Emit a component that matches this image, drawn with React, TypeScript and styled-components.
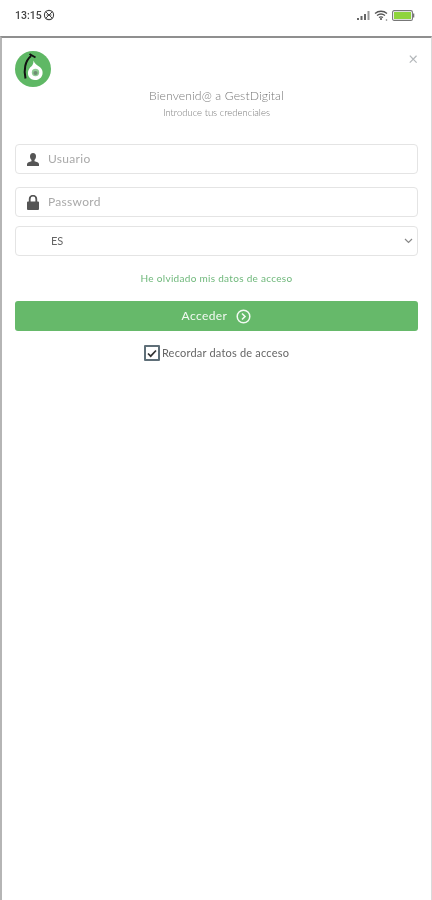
import React from "react";
import styled, { createGlobalStyle } from "styled-components";

const GlobalStyle = createGlobalStyle`
  html, body {
    margin: 0;
    padding: 0;
    background: #fff;
  }
  * {
    box-sizing: border-box;
  }
`;

const Screen = styled.div`
  width: 432px;
  height: 900px;
  display: flex;
  flex-direction: column;
  background: #fff;
  overflow: hidden;
  font-family: Lato, "Open Sans", sans-serif;
  filter: blur(0.6px);
`;

const StatusBar = styled.div`
  height: 36px;
  flex: none;
  display: flex;
  align-items: center;
  justify-content: space-between;
  padding: 0 17px 6px 15px;
`;

const Clock = styled.div`
  display: flex;
  align-items: center;
  gap: 1px;
  font-family: Roboto, sans-serif;
  font-size: 10.5px;
  font-weight: 500;
  color: #444;
`;

const StatusIcons = styled.div`
  display: flex;
  align-items: center;
  gap: 3px;
`;

const Sheet = styled.div`
  flex: 1;
  display: flex;
  flex-direction: column;
  border-top: 2px solid #8f8f8f;
  border-left: 2px solid #b5b5b5;
  border-right: 1px solid #dadada;
  padding: 13px 13px 0;
`;

const TopRow = styled.div`
  display: flex;
  justify-content: space-between;
  align-items: flex-start;
`;

const Close = styled.div`
  margin: -1px 0 0 0;
  font-size: 17px;
  line-height: 17px;
  color: #b4b8bb;
`;

const Title = styled.div`
  margin-top: 1px;
  text-align: center;
  font-size: 12.2px;
  font-weight: 300;
  line-height: 16px;
  letter-spacing: 0.1px;
  color: #777;
`;

const Subtitle = styled.div`
  margin-top: 3px;
  text-align: center;
  font-size: 9.5px;
  font-weight: 300;
  line-height: 12px;
  color: #777;
`;

const Form = styled.div`
  margin-top: 25px;
  display: flex;
  flex-direction: column;
`;

const Field = styled.div<{ $mb: number }>`
  height: 30px;
  margin-bottom: ${(p) => p.$mb}px;
  display: flex;
  align-items: center;
  position: relative;
  border: 1.5px solid #e4e4e4;
  border-radius: 4px;
  background: #fff;
`;

const FieldIcon = styled.span`
  width: 32px;
  flex: none;
  display: flex;
  justify-content: center;
  padding-left: 1px;
`;

const Placeholder = styled.span`
  margin-top: -2px;
  font-size: 12px;
  letter-spacing: 0.3px;
  color: #a9a9a9;
`;

const SelectValue = styled.span`
  margin: -2px 0 0 35px;
  font-size: 11px;
  color: #666;
`;

const Chevron = styled.svg`
  position: absolute;
  right: 4px;
  top: 11px;
`;

const ForgotLink = styled.div`
  margin-top: 15px;
  text-align: center;
  font-size: 10px;
  line-height: 14px;
  letter-spacing: 0.3px;
  color: #6fb87b;
`;

const SubmitButton = styled.div`
  margin-top: 16px;
  height: 30px;
  display: flex;
  align-items: center;
  justify-content: center;
  gap: 9px;
  border-radius: 3px;
  background: #66b96a;
  color: #f2faf2;
  font-size: 12px;
  letter-spacing: 0.4px;
`;

const ButtonLabel = styled.span`
  margin-top: -2px;
`;

const Remember = styled.div`
  margin-top: 14px;
  display: flex;
  align-items: center;
  justify-content: center;
  gap: 2px;
  font-size: 11px;
  line-height: 16px;
  letter-spacing: 0.2px;
  color: #666;
`;

const CheckBox = styled.span`
  width: 16px;
  height: 16px;
  display: flex;
  align-items: center;
  justify-content: center;
  border: 2px solid #5f6f78;
  border-radius: 1px;
`;

const Logo = () => (
  <svg width="36" height="36" viewBox="0 0 36 36">
    <circle cx="18" cy="18" r="18" fill="#5fb865" />
    <path d="M18.500 9.500c1 3 3 4.500 5.500 6 4 2.300 4.700 7.500 2 11-3.200 3.500-9.500 3.500-12-.5-2.300-4-.5-8.500 2.300-10.500 1.700-1.600 2.200-3.800 2.200-6z" fill="#fff" />
    <circle cx="20.500" cy="21.500" r="3.700" fill="#8fcb94" />
    <circle cx="20.500" cy="22" r="2.100" fill="#6f8f73" />
    <path d="M10.500 27.500C8.500 19 10 10 16 5M14.500 3l6 3.500" fill="none" stroke="#111" strokeWidth="2" />
  </svg>
);

const UserIcon = () => (
  <svg width="12" height="13" viewBox="0 0 12 13">
    <path d="M6 0c2 0 3 1.300 3 3.200 0 1.600-.7 3-1.500 3.700v1.300c2 .6 4.500 1.200 4.500 3V13H0v-1.800c0-1.800 2.500-2.400 4.500-3V6.900C3.700 6.200 3 4.800 3 3.200 3 1.300 4 0 6 0z" fill="#555" />
  </svg>
);

const LockIcon = () => (
  <svg width="12" height="15" viewBox="0 0 12 15">
    <path d="M1 6.500h10a1 1 0 0 1 1 1V14a1 1 0 0 1-1 1H1a1 1 0 0 1-1-1V7.500a1 1 0 0 1 1-1z" fill="#555" />
    <path d="M2.700 7V4a3.300 3.300 0 0 1 6.600 0v3" fill="none" stroke="#555" strokeWidth="1.800" />
  </svg>
);

const App = () => (
  <Screen>
    <GlobalStyle />
    <StatusBar>
      <Clock>
        13:15
        <svg width="12" height="12" viewBox="0 0 12 12">
          <circle cx="6" cy="6" r="4.600" fill="none" stroke="#444" strokeWidth="1.100" />
          <path d="M3 3l6 6M9 3L3 9M3.500 6h5" stroke="#444" strokeWidth="1" />
        </svg>
      </Clock>
      <StatusIcons>
        <svg width="14" height="10" viewBox="0 0 14 10">
          <path d="M0 8h2v2H0zM3.500 6h2v4h-2zM7 4h2v6H7z" fill="#666" />
          <path d="M10.500 1h2v9h-2z" fill="#999" />
        </svg>
        <svg width="15" height="11" viewBox="0 0 15 11">
          <path d="M1 3.500C4.500 .5 9.500 .5 13 3.500M3 5.600c2.500-2 5.500-2 8 0M5 7.500c1.300-.9 2.700-.9 4 0" fill="none" stroke="#555" strokeWidth="1.300" />
          <circle cx="7" cy="9" r="1.100" fill="#555" />
          <circle cx="12.500" cy="10" r=".8" fill="#777" />
        </svg>
        <svg width="23" height="11" viewBox="0 0 23 11">
          <rect x=".6" y=".6" width="19.800" height="9.800" rx="1.500" fill="none" stroke="#777" strokeWidth="1.100" />
          <rect x="2" y="2" width="17" height="7" fill="#8fd43c" />
          <path d="M21 3.500h1.300v4H21z" fill="#777" />
        </svg>
      </StatusIcons>
    </StatusBar>
    <Sheet>
      <TopRow>
        <Logo />
        <Close>×</Close>
      </TopRow>
      <Title>Bienvenid@ a GestDigital</Title>
      <Subtitle>Introduce tus credenciales</Subtitle>
      <Form>
        <Field $mb={13}>
          <FieldIcon>
            <UserIcon />
          </FieldIcon>
          <Placeholder>Usuario</Placeholder>
        </Field>
        <Field $mb={9}>
          <FieldIcon>
            <LockIcon />
          </FieldIcon>
          <Placeholder>Password</Placeholder>
        </Field>
        <Field $mb={0}>
          <SelectValue>ES</SelectValue>
          <Chevron width="9" height="6" viewBox="0 0 9 6">
            <path d="M1 1l3.500 3.500L8 1" fill="none" stroke="#888" strokeWidth="1.200" />
          </Chevron>
        </Field>
      </Form>
      <ForgotLink>He olvidado mis datos de acceso</ForgotLink>
      <SubmitButton>
        <ButtonLabel>Acceder</ButtonLabel>
        <svg width="15" height="15" viewBox="0 0 15 15">
          <circle cx="7.500" cy="7.500" r="6.300" fill="none" stroke="#f2faf2" strokeWidth="1.500" />
          <path d="M6 4.500l3 3-3 3" fill="none" stroke="#f2faf2" strokeWidth="1.600" />
        </svg>
      </SubmitButton>
      <Remember>
        <CheckBox>
          <svg width="10" height="9" viewBox="0 0 10 9">
            <path d="M1 4.500l2.700 2.700L9 1.500" fill="none" stroke="#333" strokeWidth="1.700" />
          </svg>
        </CheckBox>
        Recordar datos de acceso
      </Remember>
    </Sheet>
  </Screen>
);

export default App;
